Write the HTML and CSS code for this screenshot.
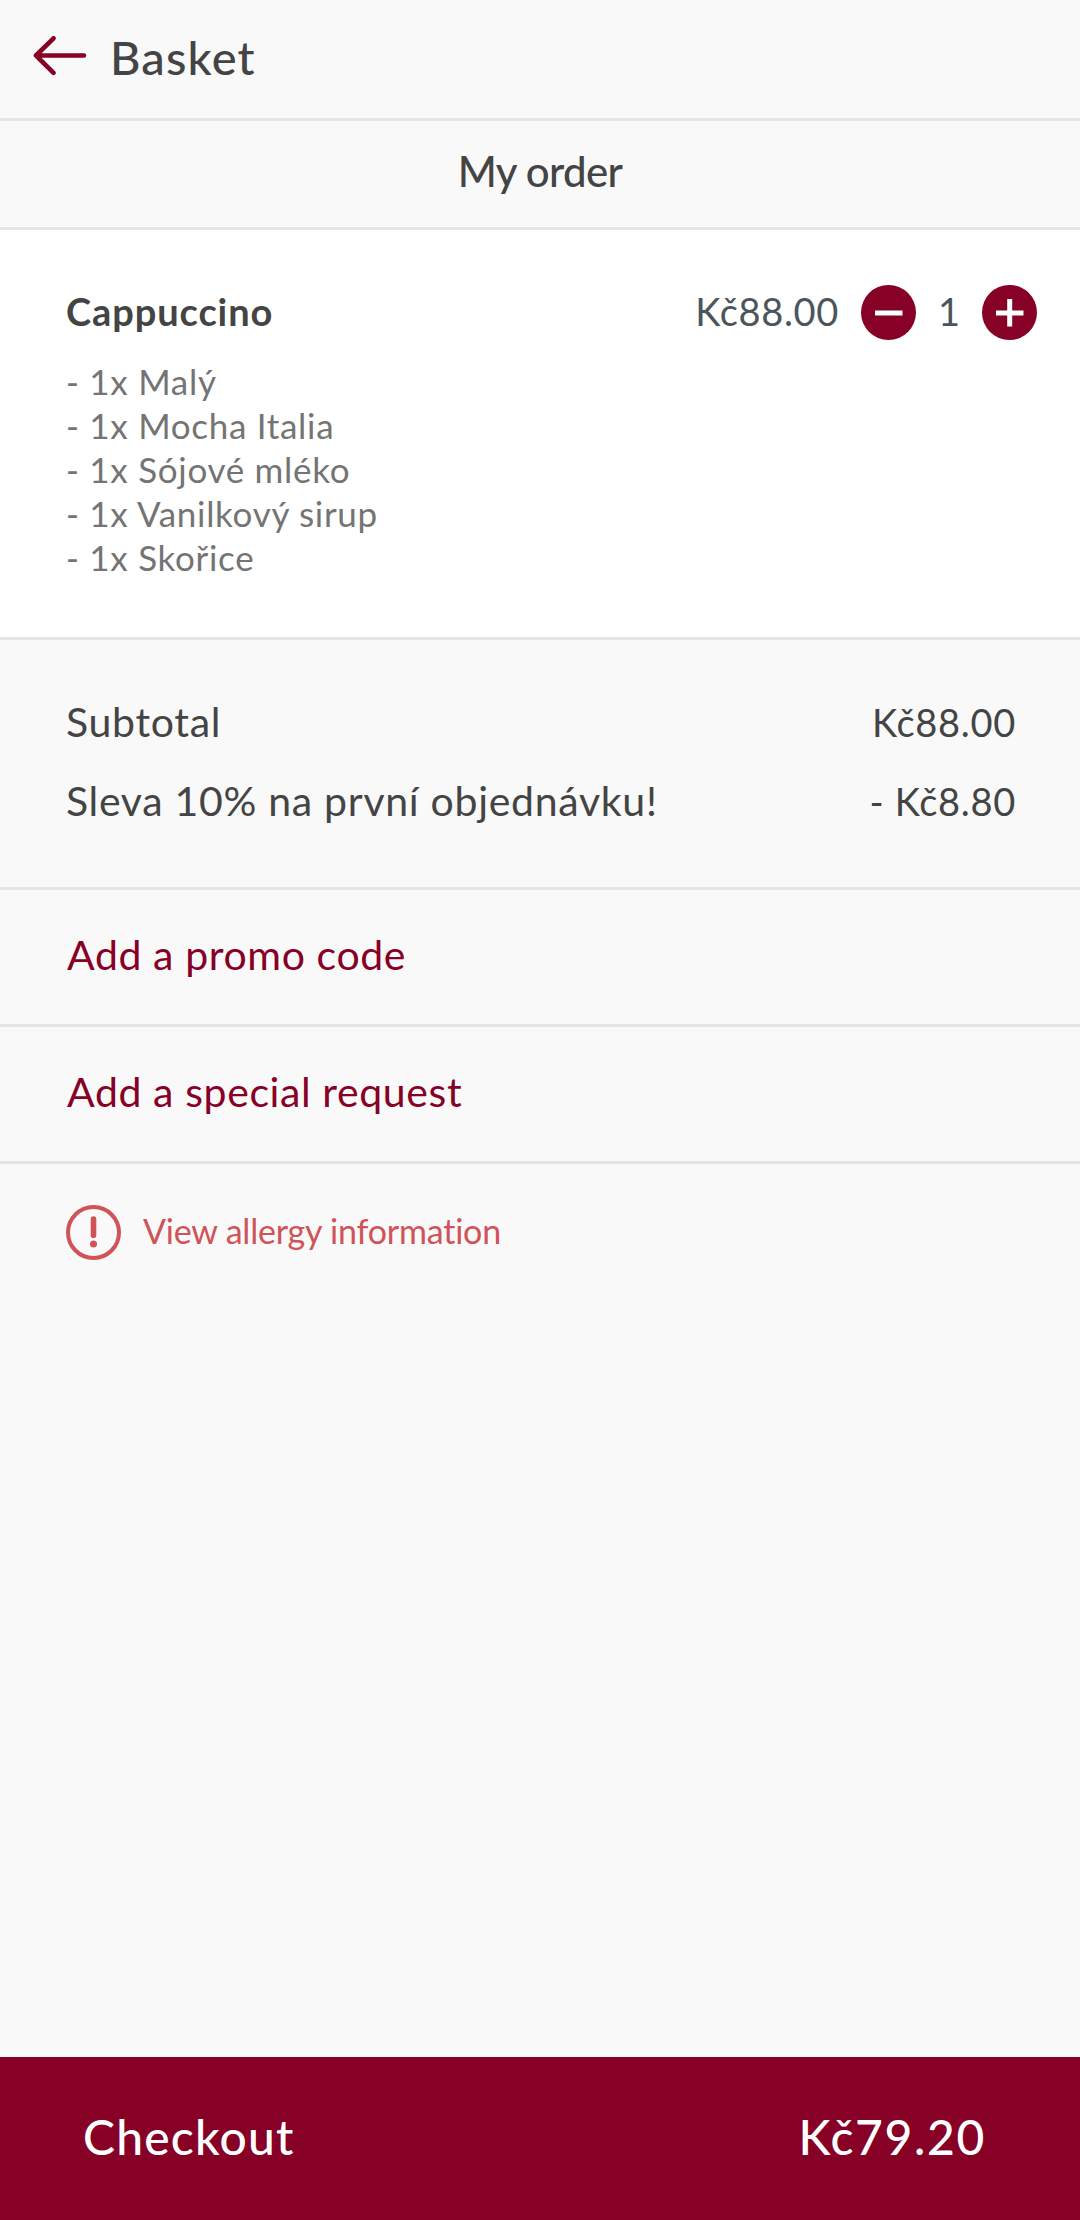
FILE: index.html
```html
<!DOCTYPE html>
<html lang="en">
<head>
  <meta charset="UTF-8">
  <title>Basket</title>
  <link rel="stylesheet" href="styles.css">
</head>
<body>
  <header class="header">
    <a href="#" class="back" aria-label="Back">
      <svg width="54" height="42" viewBox="0 0 54 42" fill="none" stroke="#870025" stroke-width="4.6" stroke-linecap="round" stroke-linejoin="round">
        <path d="M51 19.5H3M20.5 2.3L3 19.5L20.5 36.8"/>
      </svg>
    </a>
    <h1>Basket</h1>
  </header>

  <h2 class="section-title">My order</h2>

  <div class="cart-item">
    <div class="item-row">
      <h3 class="item-name">Cappuccino</h3>
      <span class="item-price">Kč88.00</span>
      <div class="quantity-controls">
        <button class="quantity-btn" aria-label="Remove one">
          <svg width="55" height="55" viewBox="0 0 55 55">
            <path d="M14 28H41.5" stroke="#fff" stroke-width="5"/>
          </svg>
        </button>
        <span class="quantity">1</span>
        <button class="quantity-btn" aria-label="Add one">
          <svg width="55" height="55" viewBox="0 0 55 55">
            <path d="M14 28H41.5M27.7 14V41.5" stroke="#fff" stroke-width="5"/>
          </svg>
        </button>
      </div>
    </div>
    <ul class="item-options">
      <li>- 1x Malý</li>
      <li>- 1x Mocha Italia</li>
      <li>- 1x Sójové mléko</li>
      <li>- 1x Vanilkový sirup</li>
      <li>- 1x Skořice</li>
    </ul>
  </div>

  <div class="summary">
    <div class="summary-row">
      <span>Subtotal</span>
      <span class="amount">Kč88.00</span>
    </div>
    <div class="summary-row">
      <span>Sleva 10% na první objednávku!</span>
      <span class="amount">- Kč8.80</span>
    </div>
  </div>

  <a href="#" class="action">Add a promo code</a>
  <a href="#" class="action">Add a special request</a>

  <a href="#" class="allergy">
    <svg width="55" height="55" viewBox="0 0 55 55" fill="none" stroke="#d05358">
      <circle cx="27.5" cy="27.5" r="25.5" stroke-width="4"/>
      <path d="M27.5 14V30.2" stroke-width="5.6" stroke-linecap="round"/>
      <circle cx="27.5" cy="39" r="3.5" fill="#d05358" stroke="none"/>
    </svg>
    <span>View allergy information</span>
  </a>

  <a href="#" class="checkout">
    <span>Checkout</span>
    <span class="total">Kč79.20</span>
  </a>
</body>
</html>
```
FILE: styles.css
```css
* {
  margin: 0;
  padding: 0;
  box-sizing: border-box;
}

body {
  display: flex;
  flex-direction: column;
  min-height: 100vh;
  background-color: #f9f9f9;
  color: #444;
  font-family: Lato, "Open Sans", sans-serif;
}

a {
  color: #870025;
  text-decoration: none;
}

svg {
  display: block;
}

/* Header */
.header {
  display: flex;
  align-items: center;
  gap: 23px;
  height: 121px;
  padding: 0 33px 4px;
  border-bottom: 3px solid #e5e5e5;
}

.header h1 {
  font-size: 47px;
  font-weight: 500;
  letter-spacing: 1.18px;
}

.section-title {
  display: flex;
  align-items: center;
  justify-content: center;
  height: 109px;
  padding-bottom: 7px;
  border-bottom: 3px solid #e5e5e5;
  font-size: 42px;
  font-weight: 500;
  letter-spacing: -0.65px;
}

/* Cart item */
.cart-item {
  padding: 55px 43px 58px 66px;
  background-color: #fff;
  border-bottom: 3px solid #e5e5e5;
}

.item-row {
  display: flex;
  align-items: center;
  height: 55px;
  font-size: 38px;
}

.item-name {
  flex: 1;
  padding-bottom: 4px;
  font-size: 38px;
  font-weight: 700;
  letter-spacing: 0.9px;
}

.item-price {
  padding-bottom: 4px;
  margin-right: 22px;
  color: #4b555b;
  letter-spacing: 0.67px;
}

.quantity-controls {
  display: flex;
  align-items: center;
}

.quantity-btn {
  width: 55px;
  height: 55px;
  background-color: #870025;
  border: none;
  border-radius: 50%;
  cursor: pointer;
}

.quantity {
  width: 66px;
  padding-bottom: 4px;
  color: #4b555b;
  text-align: center;
}

.item-options {
  margin-top: 19px;
  list-style-type: none;
  color: #747474;
  font-size: 35px;
  line-height: 44px;
  letter-spacing: 0.7px;
}

/* Summary */
.summary {
  padding: 42px 64px 47px 66px;
  border-bottom: 3px solid #e5e5e5;
  font-size: 41px;
  line-height: 79px;
  letter-spacing: 0.7px;
}

.summary-row {
  display: flex;
  align-items: baseline;
  justify-content: space-between;
  height: 79px;
}

.amount {
  font-size: 38px;
}

.action {
  display: flex;
  align-items: center;
  height: 137px;
  padding: 0 67px 5px;
  border-bottom: 3px solid #e5e5e5;
  font-size: 41px;
  letter-spacing: 0.6px;
}

.allergy {
  display: flex;
  align-items: center;
  gap: 22px;
  padding: 41px 66px;
  color: #d05358;
  font-size: 34px;
  letter-spacing: -0.2px;
}

.allergy span {
  padding-bottom: 5px;
}

/* Checkout bar */
.checkout {
  display: flex;
  align-items: center;
  justify-content: space-between;
  height: 163px;
  margin-top: auto;
  padding: 0 94px 4px 83px;
  background-color: #870025;
  color: #fff;
  font-size: 48px;
  font-weight: 500;
  letter-spacing: 1.18px;
}

.total {
  letter-spacing: 1.65px;
}
```
